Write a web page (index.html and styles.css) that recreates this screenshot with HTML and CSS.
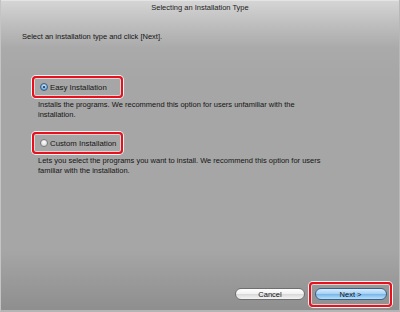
FILE: index.html
```html
<!DOCTYPE html>
<html>
	<head>
		<meta charset="UTF-8">
		<title>Selecting an Installation Type</title>
		<link rel="stylesheet" href="styles.css">
	</head>
	<body>
		<div id="win">
			<div class="title">Selecting an Installation Type</div>
			<div class="main">
				<p class="intro">Select an installation type and click [Next].</p>
				<div class="opt">
					<label class="mark">
						<span class="radio on"></span>
						<span>Easy Installation</span>
					</label>
					<p class="desc">Installs the programs. We recommend this option for users unfamiliar with the<br>installation.</p>
				</div>
				<div class="opt">
					<label class="mark">
						<span class="radio"></span>
						<span>Custom Installation</span>
					</label>
					<p class="desc">Lets you select the programs you want to install. We recommend this option for users<br>familiar with the installation.</p>
				</div>
			</div>
			<div class="btns">
				<span class="btn">Cancel</span>
				<span class="hl"><span class="btn def">Next &gt;</span></span>
			</div>
		</div>
	</body>
</html>
```
FILE: styles.css
```css
*{margin: 0;padding: 0;box-sizing: border-box;}
body{font-family: "Liberation Sans", Arial, sans-serif;font-size: 7.5px;color: #151515;}
#win{
	width: 400px;
	height: 312px;
	display: flex;
	flex-direction: column;
	border-left: 1px solid #c4c4c4;
	border-right: 1px solid #b8b8b8;
	border-bottom: 2px solid #b4b4b4;
	background: linear-gradient(#d6d6d6 0, #c2c2c2 20px, #aaaaaa 48px, #a6a6a6 80px, #a6a6a6 250px, #8f8f8f 308px);
}
.title{
	height: 13px;
	line-height: 13px;
	text-align: center;
	font-size: 7.5px;
	color: #222;
	border-top: 1px solid #e4e4e4;
}
.main{
	flex: 1;
	padding: 19px 0 0 21px;
}
.intro{
	line-height: 10px;
}
.opt{
	margin-left: 10px;
}
.opt:first-of-type{margin-top: 34px;}
.opt + .opt{margin-top: 12px;}
.mark{
	width: 91px;
	height: 22px;
	display: flex;
	align-items: center;
	gap: 2px;
	padding-left: 6px;
	border: 2px solid #e8101c;
	border-radius: 4px;
	box-shadow: 0 0 0 1px #f4f4f4, inset 0 0 0 1px #d4d4d4;
	font-size: 7.8px;
}
.radio{
	width: 8px;
	height: 8px;
	border-radius: 50%;
	border: 1px solid #7a7a7a;
	background: radial-gradient(circle at 50% 35%, #ffffff 0, #dcdcdc 70%);
	position: relative;
}
.radio.on{
	border-color: #3a5f8a;
	background: radial-gradient(circle at 50% 35%, #d4ecff 0, #5f9ed6 75%);
}
.radio.on::after{
	content: "";
	position: absolute;
	left: 2px;
	top: 2px;
	width: 2px;
	height: 2px;
	border-radius: 50%;
	background: #10243c;
}
.desc{
	margin: 2px 0 0 6px;
	line-height: 10px;
}
.btns{
	height: 28px;
	margin-bottom: 2px;
	display: flex;
	justify-content: flex-end;
	align-items: center;
	gap: 4px;
	padding-right: 7px;
}
.btn{
	width: 70px;
	height: 12px;
	line-height: 11px;
	text-align: center;
	border: 1px solid #6f6f6f;
	border-radius: 6px;
	background: linear-gradient(#ffffff 0, #f2f2f2 45%, #dadada 55%, #f4f4f4 100%);
	font-size: 7.5px;
	color: #111;
	display: block;
}
.btn.def{
	width: 72px;
	border-color: #3d5f85;
	background: linear-gradient(#d8ecfc 0, #a9d2f4 45%, #7bb8ea 55%, #b8e0fc 100%);
}
.hl{
	width: 83px;
	height: 25px;
	display: flex;
	align-items: center;
	justify-content: center;
	border: 2px solid #e8101c;
	border-radius: 4px;
	box-shadow: 0 0 0 1px #f4f4f4, inset 0 0 0 1px #d4d4d4;
}
```
